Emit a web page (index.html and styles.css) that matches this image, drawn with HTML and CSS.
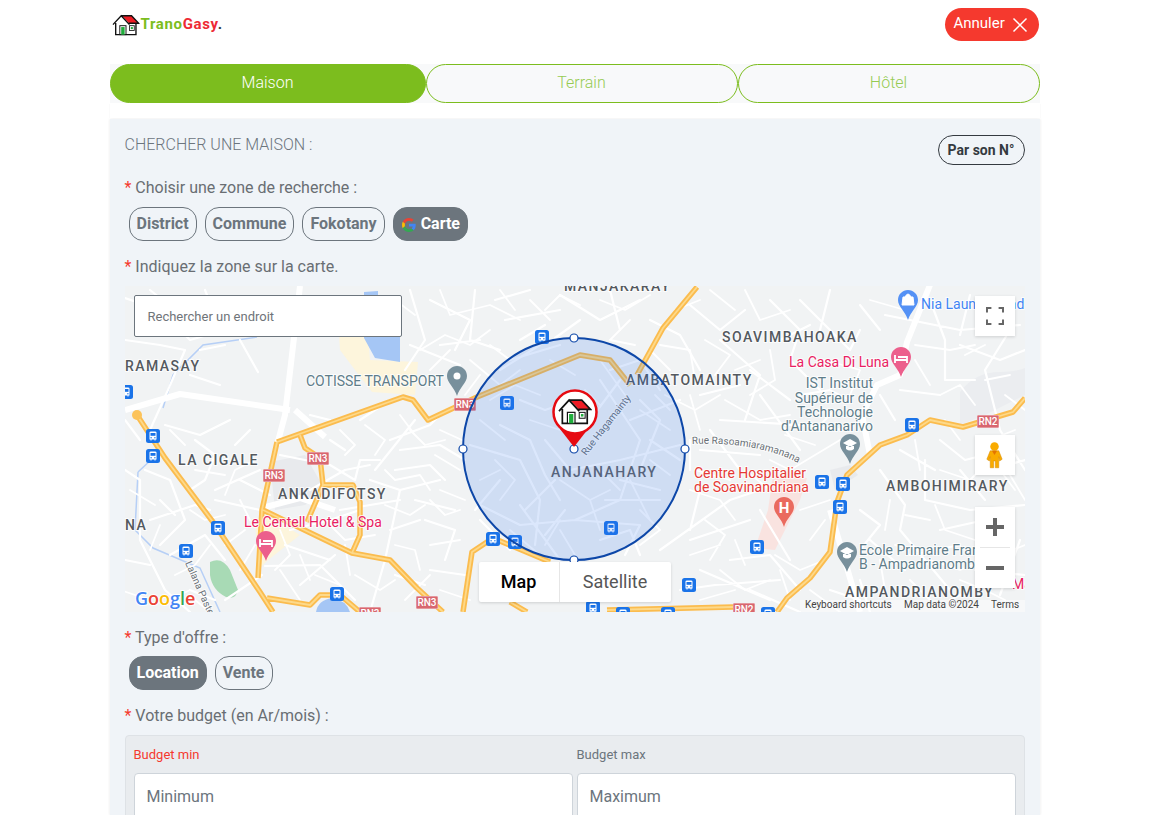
FILE: index.html
```html
<!DOCTYPE html>
<html lang="fr">
<head>
<meta charset="utf-8">
<title>TranoGasy</title>
<link rel="stylesheet" href="styles.css">
</head>
<body>
<svg class="defs" width="0" height="0" aria-hidden="true">
  <defs>
    <symbol id="house" viewBox="0 0 40 32">
      <polygon points="14,2.5 28,2.5 38,13 24,13" fill="#ee1c25"/>
      <path d="M1 15.500 13 2.500 25 15.500M13 2.500H28L38.500 13.500H24M5 13V30H34.500V13.500" fill="#fff" fill-opacity="0" stroke="#111" stroke-width="2"/>
      <rect x="11" y="17" width="9" height="13" fill="#fff" stroke="#111" stroke-width="1.400"/>
      <rect x="13" y="19" width="5" height="11" fill="#1fae3c"/>
      <rect x="25" y="17" width="7" height="7" fill="#fff" stroke="#111" stroke-width="1.200"/>
      <rect x="27" y="19" width="3" height="3" fill="#1fae3c"/>
    </symbol>
    <symbol id="bus" viewBox="0 0 14 14">
      <rect width="14" height="14" rx="2.500" fill="#1a73e8"/>
      <path d="M3.500 3.500Q3.500 2.500 5 2.500H9Q10.500 2.500 10.500 3.500V10.500H9.500V11.500H8.500V10.500H5.500V11.500H4.500V10.500H3.500Z" fill="#fff"/>
      <rect x="4.500" y="4" width="5" height="2.800" fill="#1a73e8"/>
      <circle cx="5.100" cy="8.800" r=".7" fill="#1a73e8"/><circle cx="8.900" cy="8.800" r=".7" fill="#1a73e8"/>
    </symbol>
    <symbol id="pin" viewBox="0 0 20 30">
      <path d="M10 0C4.500 0 0 4.400 0 9.900 0 17 7.500 21 10 30 12.500 21 20 17 20 9.900 20 4.400 15.500 0 10 0Z" fill="currentColor"/>
    </symbol>
    <symbol id="rn3" viewBox="0 0 24 14">
      <rect width="24" height="14" rx="1" fill="#d8666f" stroke="#fff" stroke-opacity=".6"/>
    </symbol>
  </defs>
</svg>
<div class="page">
  <header class="topbar">
    <a class="logo">
      <svg class="logo-icon" viewBox="0 0 40 32"><use href="#house"/></svg>
      <span class="logo-text"><span class="green">Trano</span><span class="red">Gasy</span><span class="dot">.</span></span>
    </a>
    <button class="cancel"><span class="cancel-text">Annuler</span>
      <svg class="cancel-x" viewBox="0 0 16 16"><path d="M1.500 1.500 14.500 14.500M14.500 1.500 1.500 14.500"/></svg>
    </button>
  </header>

  <nav class="tabs">
    <div class="tab tab-maison active">Maison</div>
    <div class="tab tab-terrain">Terrain</div>
    <div class="tab tab-hotel">Hôtel</div>
  </nav>
  <div class="tab-gap"></div>

  <main class="panel">
    <div class="panel-head">
      <h1 class="title">CHERCHER UNE MAISON :</h1>
      <button class="outline-dark">Par son N°</button>
    </div>

    <p class="label first"><span class="star">*</span> Choisir une zone de recherche :</p>
    <div class="chips">
      <span class="chip">District</span>
      <span class="chip">Commune</span>
      <span class="chip">Fokotany</span>
      <span class="chip on">
        <svg class="g-icon" viewBox="0 0 48 48"><path fill="#ea4335" d="M24 9.500c3.500 0 6.700 1.300 9.200 3.400l6.800-6.800C35.900 2.400 30.300 0 24 0 14.600 0 6.500 5.400 2.600 13.200l7.900 6.200C12.400 13.600 17.700 9.500 24 9.500z"/><path fill="#4285f4" d="M47 24.500c0-1.600-.1-3.100-.4-4.500H24v9h12.900c-.6 3-2.200 5.500-4.700 7.200l7.700 6C44.400 37.900 47 31.800 47 24.500z"/><path fill="#fbbc05" d="M10.500 28.600C10 27.200 9.800 25.600 9.800 24s.3-3.200.7-4.600l-7.900-6.200C.9 16.500 0 20.100 0 24s.9 7.500 2.600 10.800z"/><path fill="#34a853" d="M24 48c6.500 0 11.900-2.100 15.900-5.800l-7.700-6c-2.200 1.400-4.900 2.300-8.200 2.300-6.300 0-11.600-4.200-13.500-9.900l-7.900 6.200C6.500 42.600 14.600 48 24 48z"/></svg>
        Carte</span>
    </div>

    <p class="label"><span class="star">*</span> Indiquez la zone sur la carte.</p>
    <section class="map">
      <svg class="map-canvas" viewBox="125 286 900 326" width="900" height="326">
        <rect x="125" y="286" width="900" height="326" fill="#f1f3f4"/>
        <!-- areas -->
        <path d="M338 320 366 315 370 360 418 362 415 395 372 392 355 370 340 350Z" fill="#fdf5dc"/>
        <path d="M364 292 378 291 378 308 400 325 400 362 375 358 364 338Z" fill="#a5c6f5"/>
        <path d="M210 562Q222 556 230 570L238 590Q236 600 226 597 212 590 210 575Z" fill="#a8dab5"/>
        <path d="M316 612Q318 600 332 598 346 600 350 612Z" fill="#a5c6f5"/>
        <path d="M773 475 807 478 800 500 775 550 755 548 768 510Z" fill="#f9e3e0"/>
        <path d="M960 392Q975 372 1000 372 1015 372 1025 368V395L985 415 960 425Z" fill="#ebedf0"/>
        <path d="M270 462 305 455 325 490 305 505 275 510Z" fill="#e8eaed"/>
        <path d="M830 470 850 465 858 475 835 490Z" fill="#e8eaed"/>
        <path d="M255 520 268 515 300 535 268 560 258 570Z" fill="#fdf5dc"/>

        <!-- waterways -->
        <path class="river" d="M257 337 203 345 173 375 163 408M138 472 153 458M138 472 135 530 153 548 200 568 220 612"/>

        <!-- minor streets -->
        <path class="street" d="M125 298 160 310 190 340 225 330 250 300M150 290 175 310M205 290 215 315M125 340 160 345 185 350 168 390 150 430M200 350 225 345M240 340 258 372M190 375 220 385M125 420 140 440M165 425 200 435 230 420M195 440 215 455 205 480 190 490M145 470 170 480 185 520 160 545M125 470 140 480 140 540 165 590 190 612M125 560 150 565M160 500 175 515M150 520 195 505 210 510M170 555 205 535 225 560M215 490 260 470M235 445 250 430M215 500 260 510M240 480 270 495M190 590 215 600M225 600 262 575"/>
        <path class="street" d="M280 455 330 465 355 480 360 460 380 460M330 440 345 450M360 420 390 400M310 415 330 420M390 440 430 425 445 410M400 450 440 445 465 460M395 470 430 465 445 480M370 480 400 490 385 560 370 612M400 490 440 480M415 500 455 510M425 520 455 530 445 560M390 530 420 520M430 570 465 575M395 575 425 585M310 490 345 470M340 510 400 500M290 530 330 520 360 510M285 545 330 560M265 566 320 565 355 600M300 585 335 555M375 470 415 420M345 300 400 330M410 290 425 340 405 370M430 300 470 320 455 350M440 345 480 340M475 290 470 340 500 350M495 300 530 290M505 320 560 310M520 340 545 325M410 345 460 365M500 370 540 345"/>
        <path class="street" d="M560 295 600 320 640 300M610 290 620 330M580 320 555 338M650 320 680 335 700 370M690 305 720 330 745 310M720 340 760 375 745 420M770 300 800 330 790 360 820 390M750 370 790 400M700 395 740 385M760 395 800 450M720 420 800 425 845 430M690 440 690 470M700 450 760 455M710 430 740 470M700 490 690 530M660 550 730 500 760 490M690 540 750 520M700 570 770 600M730 560 770 555 800 590M760 510 790 560M680 590 715 585 780 580M750 590 800 612M800 300 850 350 860 330M830 290 820 330M860 305 880 330M780 340 810 325M885 315 960 330 1020 325M930 300 945 340 945 380 975 380M960 345 1000 360 1025 350M900 390 940 395M880 395 895 420M970 295 960 335M1010 330 985 370 1000 430 1025 470M940 440 965 460 1005 450M925 460 925 500 970 510 1025 505M900 450 935 470M880 470 905 505 900 530 950 590M860 510 880 525 860 550M940 530 985 520 1010 550M910 555 960 545M990 470 1025 460M960 470 985 500M870 540 905 570M975 570 1025 575M830 590 860 600M860 580 870 612M950 600 990 580M1020 540 1000 595"/>
        <path class="street" d="M520 400 545 410 575 400M500 425 530 440 545 475 560 500M470 445 520 460 540 500 535 545M500 480 475 510M545 440 570 470 620 460 680 445M600 380 640 440 620 500 575 520 520 525 480 505M590 420 620 380M640 400 660 420 640 470M650 440 680 460M520 505 560 560M565 510 545 535M605 500 660 500M575 520 640 525 625 555M620 480 660 490M555 480 525 510M610 370 640 360 660 390M630 420 680 400M510 360 560 345M480 520 510 550M600 540 630 530 640 555"/>
        <path class="street thin" d="M340 430 355 445 345 455M365 425 385 440 375 455M410 430 425 445 445 440M440 430 462 440M400 415 415 435M435 455 460 470M345 470 370 465M385 470 395 480 420 475 430 490M440 490 465 500M330 525 345 540 375 535M345 545 350 575M355 575 380 590 395 580M395 545 415 550 420 570M430 545 460 540M440 590 470 600M405 600 430 575M315 575 340 585M280 530 290 555 275 570M300 555 310 580M240 500 250 520M225 495 235 470 255 460M385 505 410 515 425 505M430 500 445 515 460 510"/>
        <path class="street thin" d="M420 350 445 335 470 345 490 330M440 290 450 315 490 305 520 320M500 290 515 310M530 300 550 320M470 360 500 385 520 370M430 370 450 350M490 345 510 360M545 310 560 295 580 305M395 300 415 315M480 375 465 395M600 300 625 310 650 295M630 320 610 340 635 345M660 345 690 350 695 380M675 310 700 300M705 340 730 355 715 375M710 290 735 310M745 290 760 320 790 310M735 370 760 360M770 350 775 380 750 395M665 395 695 410 720 395M690 395 700 430M650 350 670 370M725 400 760 420 790 415"/>
        <path class="street thin" d="M695 470 730 480M690 490 720 500 735 520M705 520 725 535 710 560M735 540 745 565M690 555 720 545M720 570 745 590 770 580M775 555 800 570 825 560M780 570 790 600M810 540 825 520M800 510 830 500M700 600 735 590M810 590 840 612M770 460 790 470 815 455 840 440M745 470 770 490M815 430 835 410M800 395 830 390 850 400M825 360 860 370 850 395M785 435 815 445M870 300 905 310M915 345 950 350 975 345M965 355 985 345M915 360 930 385M940 395 960 385 975 405M985 380 1010 375M1005 395 1025 410M990 440 1015 430M945 420 960 440M915 440 920 470M940 470 970 480 985 465M1000 470 1015 490M890 500 885 530M905 515 930 520M935 505 945 530 975 540M985 530 1000 520M895 545 925 550M930 560 960 570 985 560M1000 555 1025 545M880 560 885 590M910 580 930 600M960 580 985 590 1005 600M1010 475 1025 500"/>
        <path class="street thin" d="M170 430 185 445M195 470 225 475M130 490 155 505M160 525 150 550M175 575 195 565 210 545M190 510 205 520 225 515M225 545 245 530M120 590 150 600M195 600 210 612M240 570 255 545M280 570 300 600M170 600 190 590M490 400 515 385 540 395M480 420 505 440M495 460 515 480 500 500M530 420 560 430M550 360 575 375M600 360 625 395M585 390 600 405M640 410 670 430M655 395 670 410M650 460 670 475M630 480 650 520M600 470 620 490M560 480 590 500 610 490M590 500 600 530M510 530 540 555M560 530 575 555M480 480 500 470M640 510 660 530 640 545M545 545 560 520"/>
        <path class="major" d="M125 410 180 394 290 410M300 286 285 415 277 445M295 410 325 437M930 285 907 342 900 375 877 385 862 415 870 455M830 510 860 612M262 508 300 498 335 510"/>

        <!-- highways -->
        <g class="hw">
          <path d="M137 415 165 458 213 522 260 592 273 612M277 442 403 397 413 400 428 420 477 397 580 355 610 360 630 385M637 375 663 328 697 287M277 442 262 510 258 578M300 435 305 448 320 458 323 485 353 485 360 502 360 535 352 553M263 510 352 553 390 560 417 588 443 612M323 485 307 522M267 598 310 605 320 595 340 595 360 612M1025 398 1013 412 963 427 930 420 907 435 880 445 847 475 837 502 830 552 810 578 787 598 777 612M493 538 472 552 463 612M493 538 550 562M510 602 527 612M607 610 733 607"/>
        </g>
        <g class="hw-in">
          <path d="M137 415 165 458 213 522 260 592 273 612M277 442 403 397 413 400 428 420 477 397 580 355 610 360 630 385M637 375 663 328 697 287M277 442 262 510 258 578M300 435 305 448 320 458 323 485 353 485 360 502 360 535 352 553M263 510 352 553 390 560 417 588 443 612M323 485 307 522M267 598 310 605 320 595 340 595 360 612M1025 398 1013 412 963 427 930 420 907 435 880 445 847 475 837 502 830 552 810 578 787 598 777 612M493 538 472 552 463 612M493 538 550 562M510 602 527 612M607 610 733 607"/>
        </g>
        <circle cx="137" cy="415" r="5" fill="#fcc35a"/>

        <!-- shields -->
        <g class="shield-text">
          <use href="#rn3" x="454" y="398" width="22" height="13"/><text x="465" y="408">RN3</text>
          <use href="#rn3" x="307" y="452" width="22" height="13"/><text x="318" y="462">RN3</text>
          <use href="#rn3" x="263" y="469" width="22" height="13"/><text x="274" y="479">RN3</text>
          <use href="#rn3" x="416" y="596" width="22" height="13"/><text x="427" y="606">RN3</text>
          <use href="#rn3" x="359" y="607" width="22" height="13"/><text x="370" y="617">RN3</text>
          <use href="#rn3" x="977" y="415" width="22" height="13"/><text x="988" y="425">RN2</text>
          <use href="#rn3" x="733" y="603" width="22" height="13"/><text x="744" y="613">RN2</text>
        </g>

        <!-- transit -->
        <g>
          <use href="#bus" x="146" y="429" width="14" height="14"/><use href="#bus" x="146" y="449" width="14" height="14"/>
          <use href="#bus" x="211" y="521" width="14" height="14"/><use href="#bus" x="179" y="544" width="14" height="14"/>
          <use href="#bus" x="330" y="587" width="14" height="14"/><use href="#bus" x="119" y="385" width="14" height="14"/>
          <use href="#bus" x="535" y="330" width="14" height="14"/><use href="#bus" x="500" y="396" width="14" height="14"/>
          <use href="#bus" x="486" y="532" width="14" height="14"/><use href="#bus" x="508" y="535" width="14" height="14"/>
          <use href="#bus" x="604" y="521" width="14" height="14"/><use href="#bus" x="682" y="578" width="14" height="14"/>
          <use href="#bus" x="586" y="601" width="14" height="14"/><use href="#bus" x="616" y="607" width="14" height="14"/>
          <use href="#bus" x="661" y="607" width="14" height="14"/><use href="#bus" x="905" y="418" width="14" height="14"/>
          <use href="#bus" x="815" y="475" width="14" height="14"/><use href="#bus" x="836" y="477" width="14" height="14"/>
          <use href="#bus" x="833" y="500" width="14" height="14"/><use href="#bus" x="750" y="540" width="14" height="14"/>
          <use href="#bus" x="761" y="607" width="14" height="14"/>
        </g>

        <!-- pins -->
        <g class="pins">
          <use href="#pin" class="p-grey" x="447" y="366" width="20" height="30"/><circle cx="457" cy="376" r="3.500" fill="#fff"/>
          <use href="#pin" class="p-pink" x="256" y="531" width="20" height="30"/><path class="bed" d="M260 539V547M260 544H272V547M263 541H272V544"/>
          <use href="#pin" class="p-pink" x="891" y="347" width="20" height="30"/><path class="bed" d="M895 355V363M895 360H907V363M898 357H907V360"/>
          <use href="#pin" class="p-blue" x="898" y="290" width="20" height="30"/><path d="M903 297H913L914 305H902ZM905 297Q908 291 911 297" fill="#fff" stroke="#fff"/>
          <use href="#pin" class="p-grey" x="840" y="434" width="20" height="30"/><path d="M850 439 857 443 850 447 843 443ZM846 446V449Q850 452 854 449V446" fill="#fff"/>
          <use href="#pin" class="p-grey" x="837" y="542" width="20" height="30"/><path d="M847 547 854 551 847 555 840 551ZM843 554V557Q847 560 851 557V554" fill="#fff"/>
          <use href="#pin" class="p-red" x="774" y="497" width="20" height="30"/>
          <text class="h-letter" x="784" y="513">H</text>
        </g>

        <!-- place names -->
        <g class="place">
          <text x="564" y="291">MANJAKARAY</text>
          <text x="722" y="342">SOAVIMBAHOAKA</text>
          <text x="125" y="371">RAMASAY</text>
          <text x="626" y="385">AMBATOMAINTY</text>
          <text x="178" y="465">LA CIGALE</text>
          <text x="278" y="499">ANKADIFOTSY</text>
          <text x="125" y="530">NA</text>
          <text x="886" y="491">AMBOHIMIRARY</text>
          <text x="845" y="597">AMPANDRIANOMBY</text>
        </g>
        <g class="poi poi-grey">
          <text x="306" y="386">COTISSE TRANSPORT</text>
          <text x="873" y="388" class="end">IST Institut</text>
          <text x="873" y="403" class="end">Supérieur de</text>
          <text x="873" y="417" class="end">Technologie</text>
          <text x="873" y="431" class="end">d'Antananarivo</text>
          <text x="859" y="555">Ecole Primaire Fran</text>
          <text x="859" y="569">B - Ampadrianomb</text>
        </g>
        <g class="poi poi-pink">
          <text x="244" y="527">Le Centell Hotel &amp; Spa</text>
          <text x="789" y="367">La Casa Di Luna</text>
          <text x="1012" y="589">Ma</text>
        </g>
        <g class="poi poi-red">
          <text x="694" y="478">Centre Hospitalier</text>
          <text x="694" y="492">de Soavinandriana</text>
        </g>
        <text class="poi poi-blue" x="921" y="309">Nia Laundromad</text>

        <!-- street names -->
        <path id="rue-ras" d="M692 444C730 442 770 448 796 462" fill="none"/>
        <text class="road-name"><textPath href="#rue-ras">Rue Rasoamiaramanana</textPath></text>
        <text class="road-name" transform="translate(586 456) rotate(-52)">Rue Hagamainty</text>
        <text class="road-name" transform="translate(185 563) rotate(66)">Lalana Pasteur</text>

        <!-- radius -->
        <circle class="zone" cx="574" cy="449" r="111"/>
        <text class="place zone-name" x="551" y="477">ANJANAHARY</text>
        <g class="handles">
          <circle cx="574" cy="338" r="4"/><circle cx="463" cy="449" r="4"/><circle cx="685" cy="449" r="4"/><circle cx="574" cy="560" r="4"/><circle cx="574" cy="449" r="4"/>
        </g>

        <!-- marker -->
        <path d="M560 429 574 447 588 429Z" fill="#e60b12"/>
        <circle cx="575" cy="412" r="21.500" fill="#fff" stroke="#e60b12" stroke-width="2.500"/>
        <use href="#house" x="558" y="398" width="34" height="27"/>

        <!-- google mark -->
        <text class="google" x="135" y="605"><tspan fill="#4285f4">G</tspan><tspan fill="#ea4335">o</tspan><tspan fill="#fbbc05">o</tspan><tspan fill="#4285f4">g</tspan><tspan fill="#34a853">l</tspan><tspan fill="#ea4335">e</tspan></text>

        <!-- attribution -->
        <rect x="800" y="600" width="225" height="12" fill="#fff" fill-opacity=".45"/>
        <g class="attr">
          <text x="805" y="608">Keyboard shortcuts</text>
          <text x="904" y="608">Map data ©2024</text>
          <text x="991" y="608">Terms</text>
        </g>
      </svg>

      <div class="map-search">Rechercher un endroit</div>

      <button class="map-btn btn-full" aria-label="Plein écran">
        <svg viewBox="0 0 20 20"><path d="M1 6V1H6M14 1H19V6M19 14V19H14M6 19H1V14"/></svg>
      </button>
      <button class="map-btn btn-peg" aria-label="Street View">
        <svg viewBox="0 0 20 32"><circle cx="10" cy="6" r="5" fill="#f9ab00"/><path d="M5 11H15L19 21 16 23 15 18V31H11V23H9V31H5V18L4 23 1 21Z" fill="#f9ab00" stroke="#d68a00" stroke-width=".6"/><path d="M7 11 10 16 13 11" fill="#e37400"/></svg>
      </button>
      <div class="zoom-box">
        <button class="zoom-btn" aria-label="Zoom avant"><svg viewBox="0 0 18 18"><path d="M0 9H18M9 0V18"/></svg></button>
        <span class="zoom-sep"></span>
        <button class="zoom-btn" aria-label="Zoom arrière"><svg viewBox="0 0 18 18"><path d="M0 9H18"/></svg></button>
      </div>
      <div class="map-type">
        <span class="type-opt selected">Map</span>
        <span class="type-opt">Satellite</span>
      </div>
    </section>

    <p class="label offer"><span class="star">*</span> Type d'offre :</p>
    <div class="chips">
      <span class="chip on">Location</span>
      <span class="chip">Vente</span>
    </div>

    <p class="label"><span class="star">*</span> Votre budget (en Ar/mois) :</p>
    <div class="budget">
      <div class="field">
        <label class="field-label req">Budget min</label>
        <div class="input">Minimum</div>
      </div>
      <div class="field">
        <label class="field-label">Budget max</label>
        <div class="input">Maximum</div>
      </div>
    </div>
  </main>
</div>
</body>
</html>
```

FILE: styles.css
```css
* { box-sizing: border-box; }
html, body { margin: 0; height: 815px; overflow: hidden; background: #fff; }
body { font-family: Roboto, "Liberation Sans", sans-serif; color: #6c757d; }
.defs { position: absolute; }
button { font-family: inherit; }

.page { width: 930px; margin: 0 auto; }

/* header */
.topbar { display: flex; justify-content: space-between; height: 64px; padding-top: 8px; }
.logo { display: flex; align-items: flex-start; padding: 6px 0 0 2px; }
.logo-icon { width: 28px; height: 22px; }
.logo-text { font-size: 15px; font-weight: 700; line-height: 21px; letter-spacing: .65px; margin-left: 1px; }
.green { color: #7cbd1e; }
.red { color: #ee2a35; }
.dot { color: #343a40; }
.cancel { display: flex; align-items: center; gap: 7px; height: 33px; width: 94px; margin-right: 1px; padding: 0 0 0 9px; border: 0; border-radius: 17px; background: #f5392e; color: #fff; font-size: 15px; }
.cancel-text { margin-top: -3px; }
.cancel-x { width: 16px; height: 16px; fill: none; stroke: #fff; stroke-width: 1.500; margin-top: 1px; }

/* tabs */
.tabs { display: flex; height: 39px; background: #f8f9fa; }
.tab { display: flex; align-items: center; justify-content: center; height: 39px; padding-bottom: 2px; border: 1px solid #7cbd1e; border-radius: 20px; color: #96cb52; font-size: 16px; font-weight: 300; }
.tab-maison { width: 316px; }
.tab-terrain { width: 312px; }
.tab-hotel { width: 302px; }
.tab.active { background: #7cbd1e; color: #fff; }
.tab-gap { height: 16px; box-shadow: 1px 0 1px -1px rgba(0,0,0,.1), -1px 0 1px -1px rgba(0,0,0,.1); }

/* panel */
.panel { height: 696px; padding: 16px 15px 0; background: #f0f4f8; box-shadow: 1px 0 2px rgba(0,0,0,.05), -1px 0 2px rgba(0,0,0,.05); }
.panel-head { display: flex; justify-content: space-between; align-items: flex-start; }
.title { margin: 0; font-size: 16px; font-weight: 300; line-height: 19px; color: #6c757d; }
.outline-dark { height: 30px; width: 87px; padding: 0; border: 1px solid #343a40; border-radius: 15px; background: transparent; color: #343a40; font-size: 14px; font-weight: 700; }

.label { margin: 14px 0 7px; font-size: 16px; line-height: 24px; color: #696e73; }
.label.first { margin-top: 11px; margin-bottom: 7px; }
.label.offer { margin-top: 14px; margin-bottom: 6px; }
.star { color: #f5392e; }

.chips { display: flex; gap: 8px; padding-left: 4px; }
.chip { display: flex; align-items: center; height: 34px; padding: 0 7px 2px; border: 1px solid #6c757d; border-radius: 14px; color: #6c757d; font-size: 16px; font-weight: 700; }
.chip.on { background: #6c757d; color: #fff; }
.g-icon { width: 14px; height: 14px; margin: 3px 5px 0 1px; }

/* map */
.map { position: relative; width: 900px; height: 326px; overflow: hidden; }
.map-canvas { display: block; font-family: Roboto, sans-serif; }
.street { fill: none; stroke: #fff; stroke-width: 2.200; stroke-linejoin: round; stroke-linecap: round; }
.street.thin { stroke-width: 1.800; }
.river { fill: none; stroke: #b6cff6; stroke-width: 1.500; }
.major { fill: none; stroke: #fff; stroke-width: 6; stroke-linejoin: round; }
.hw path { fill: none; stroke: #fbbc4e; stroke-width: 5.500; stroke-linejoin: round; }
.hw-in path { fill: none; stroke: #fdd98a; stroke-width: 1.800; stroke-linejoin: round; }
.shield-text text { fill: #fff; font-size: 10px; font-weight: 500; text-anchor: middle; }
.pins .p-grey { color: #78909c; }
.pins .p-pink { color: #ec5f8c; }
.pins .p-blue { color: #5491f5; }
.pins .p-red { color: #ea6a5e; }
.bed { fill: none; stroke: #fff; stroke-width: 1.800; }
.h-letter { fill: #fff; font-size: 15px; font-weight: 700; text-anchor: middle; }
.place text, .place.zone-name { fill: #54595f; font-size: 14px; font-weight: 500; letter-spacing: 1.450px; paint-order: stroke; stroke: #fff; stroke-width: 2px; stroke-opacity: .8; }
.place.zone-name { stroke: none; fill: #56647c; }
.poi { font-size: 14px; paint-order: stroke; stroke: #fff; stroke-width: 2px; stroke-opacity: .8; }
.end { text-anchor: end; }
.poi-grey { fill: #5f7d8a; }
.poi-pink { fill: #e91e63; }
.poi-red { fill: #e53935; }
.poi-blue { fill: #4285f4; }
.road-name { fill: #6a7177; font-size: 10px; paint-order: stroke; stroke: #fff; stroke-width: 2px; stroke-opacity: .7; }
.zone { fill: #2a6ef0; fill-opacity: .17; stroke: #0d47a8; stroke-width: 2; }
.handles circle { fill: #fff; stroke: #0d47a8; stroke-width: 1.200; }
.google { font-family: "Open Sans", sans-serif; font-size: 18px; font-weight: 600; paint-order: stroke; stroke: #fff; stroke-width: 2px; }
.attr text { fill: #444; font-size: 10px; }

.map-search { position: absolute; left: 9px; top: 9px; width: 268px; height: 42px; padding: 0 13px; border: 1px solid #6c757d; border-radius: 2px; background: #fff; color: #6f7479; font-size: 13px; line-height: 42px; }
.map-btn { position: absolute; left: 850px; width: 40px; height: 40px; padding: 0; border: 0; background: #fff; box-shadow: 0 1px 3px rgba(0,0,0,.15); display: flex; align-items: center; justify-content: center; }
.btn-full { top: 10px; }
.btn-full svg { width: 18px; height: 18px; fill: none; stroke: #666; stroke-width: 2.400; }
.btn-peg { top: 149px; }
.btn-peg svg { width: 17px; height: 30px; }
.zoom-box { position: absolute; left: 850px; top: 221px; width: 40px; height: 81px; background: #fff; box-shadow: 0 1px 3px rgba(0,0,0,.15); display: flex; flex-direction: column; }
.zoom-btn { flex: 1; padding: 0; border: 0; background: transparent; display: flex; align-items: center; justify-content: center; }
.zoom-btn svg { width: 18px; height: 18px; fill: none; stroke: #666; stroke-width: 4; }
.zoom-sep { height: 1px; margin: 0 5px; background: #e6e6e6; }
.map-type { position: absolute; left: 354px; top: 276px; display: flex; height: 40px; width: 192px; background: #fff; border-radius: 2px; box-shadow: 0 1px 3px rgba(0,0,0,.15); }
.type-opt { display: flex; align-items: center; justify-content: center; padding-bottom: 1px; color: #565656; font-size: 18px; width: 111px; }
.type-opt.selected { width: 81px; color: #000; font-weight: 500; border-right: 1px solid #e6e6e6; }

/* budget */
.budget { display: grid; grid-template-columns: 439px 439px; gap: 4px; height: 120px; padding: 8px 8px 0; border: 1px solid #dee2e6; border-radius: 4px; background: #e9ecef; }
.field-label { display: block; height: 29px; font-size: 13px; line-height: 22px; color: #6c757d; }
.field-label.req { color: #f5392e; }
.input { height: 58px; padding: 0 12px; border: 1px solid #ced4da; border-radius: 4px; background: #fff; color: #6c757d; font-size: 16px; line-height: 46px; }
```
